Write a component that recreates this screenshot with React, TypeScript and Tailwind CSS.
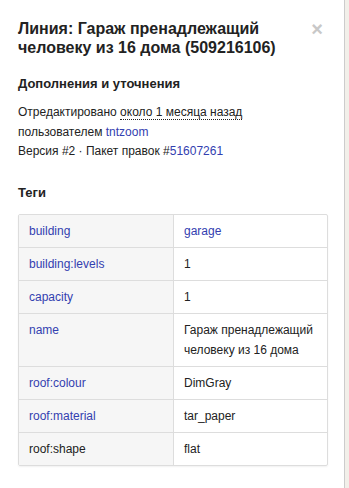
import React from 'react';

const tags: { k: string; v: string; link?: boolean; vlink?: boolean }[] = [
  { k: 'building', v: 'garage', link: true, vlink: true },
  { k: 'building:levels', v: '1', link: true },
  { k: 'capacity', v: '1', link: true },
  { k: 'name', v: 'Гараж пренадлежащий человеку из 16 дома', link: true },
  { k: 'roof:colour', v: 'DimGray', link: true },
  { k: 'roof:material', v: 'tar_paper', link: true },
  { k: 'roof:shape', v: 'flat' },
];

export default function App() {
  return (
    <div className="flex h-[488px] w-[349px] bg-[#f2efe9] font-['Liberation_Sans',Arial,sans-serif] text-[#222]">
      <div className="w-[345px] shrink-0 border-r border-[#ccc] bg-white px-[18px] pt-[19px]">
        <div className="flex items-start justify-between">
          <h2 className="w-[270px] text-[16px] font-bold leading-[19px]">
            Линия: Гараж пренадлежащий человеку из 16 дома (509216106)
          </h2>
          <span className="mr-[3px] mt-[0px] text-[20px] font-bold leading-[20px] text-[#c8c8c8]">×</span>
        </div>

        <h4 className="mt-[17px] text-[13px] font-bold leading-[20px]">Дополнения и уточнения</h4>
        <div className="mt-[9px] text-[12px] leading-[19.5px]">
          <div>
            Отредактировано{' '}
            <span className="border-b border-dotted border-[#222]">около 1 месяца назад</span>
          </div>
          <div>
            пользователем <span className="text-[#3340b0]">tntzoom</span>
          </div>
          <div>
            Версия #2 · Пакет правок #<span className="text-[#3340b0]">51607261</span>
          </div>
        </div>

        <h4 className="mt-[21px] text-[13px] font-bold leading-[20px]">Теги</h4>
        <div className="mt-[11px] w-[310px] overflow-hidden rounded-[2px] border border-[#ddd] shadow-[0_1px_2px_rgba(0,0,0,0.06)]">
          {tags.map((t, i) => (
            <div key={t.k} className={`flex text-[12px] leading-[20px] ${i > 0 ? 'border-t border-[#ddd]' : ''}`}>
              <div className={`w-[155px] shrink-0 border-r border-[#ddd] bg-[#f6f6f6] px-[10px] py-[6px] ${t.link ? 'text-[#3340b0]' : ''}`}>
                {t.k}
              </div>
              <div className={`flex-1 px-[10px] py-[6px] ${t.vlink ? 'text-[#3340b0]' : ''}`}>{t.v}</div>
            </div>
          ))}
        </div>
      </div>
      <div className="flex-1" />
    </div>
  );
}
